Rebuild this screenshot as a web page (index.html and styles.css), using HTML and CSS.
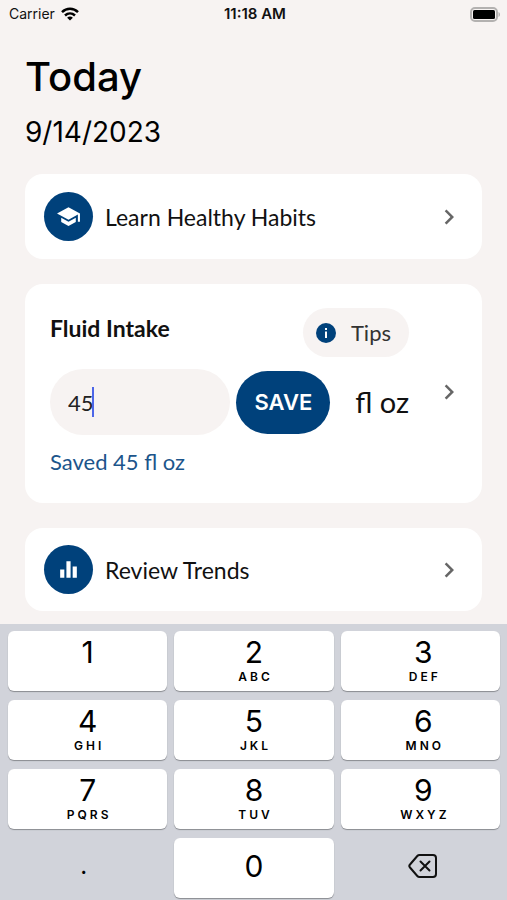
FILE: index.html
```html
<!DOCTYPE html>
<html lang="en">
<head>
<meta charset="utf-8">
<meta name="viewport" content="width=device-width, initial-scale=1">
<title>Today</title>
<link rel="stylesheet" href="styles.css">
</head>
<body>
<div class="app">
  <header class="status">
    <div class="carrier">
      <span>Carrier</span>
      <svg width="18" height="14" viewBox="0 0 18 14" fill="none" stroke="#000" stroke-width="2.5" aria-hidden="true">
        <path d="M1 5.2C5.6.7 12.4.7 17 5.2"/>
        <path d="M4 8.5c3-2.8 7-2.8 10 0"/>
        <path d="M9 13.6 6.1 10.700c1.700-1.500 4.100-1.500 5.800 0z" fill="#000" stroke="none"/>
      </svg>
    </div>
    <time class="clock">11:18 AM</time>
    <svg class="battery" width="31" height="15" viewBox="0 0 31 15" aria-hidden="true">
      <rect x="1" y="1" width="26" height="13" rx="4" fill="none" stroke="#b3b1b0" stroke-width="2"/>
      <rect x="3" y="3" width="22" height="9" rx="1.500" fill="#000"/>
      <path d="M28.500 5v5c2-.8 2-4.200 0-5z" fill="#b3b1b0"/>
    </svg>
  </header>

  <main class="content">
    <h1 class="title">Today</h1>
    <p class="date">9/14/2023</p>

    <a class="card link-card" href="#learn">
      <span class="badge">
        <svg width="25" height="25" viewBox="0 0 24 24" fill="#fff" aria-hidden="true"><path d="M5 13.180v4L12 21l7-3.820v-4L12 17l-7-3.820zM12 3 1 9l11 6 9-4.910V17h2V9L12 3z"/></svg>
      </span>
      <span class="card-label">Learn Healthy Habits</span>
      <svg class="chevron" width="30" height="30" viewBox="0 0 24 24" aria-hidden="true"><path d="M10 6 8.590 7.410 13.170 12l-4.580 4.590L10 18l6-6z"/></svg>
    </a>

    <section class="card intake">
      <div class="intake-main">
        <div class="intake-head">
          <h2><label for="fluid">Fluid Intake</label></h2>
          <button class="tips" type="button">
            <svg width="20" height="20" viewBox="0 0 20 20" aria-hidden="true"><circle cx="10" cy="10" r="10" fill="#00417b"/><path d="M9 5h2v2H9zM9 8.500h2V15H9z" fill="#fff"/></svg>
            Tips
          </button>
        </div>
        <div class="entry">
          <div class="field">
            <input id="fluid" type="text" inputmode="decimal" value="45">
            <span class="caret"></span>
          </div>
          <button class="save" type="button">SAVE</button>
          <span class="unit">fl oz</span>
        </div>
        <p class="saved">Saved 45 fl oz</p>
      </div>
      <a href="#fluid-intake" class="more" aria-label="Fluid Intake">
        <svg class="chevron" width="30" height="30" viewBox="0 0 24 24" aria-hidden="true"><path d="M10 6 8.590 7.410 13.170 12l-4.580 4.590L10 18l6-6z"/></svg>
      </a>
    </section>

    <a class="card link-card" href="#trends">
      <span class="badge">
        <svg width="25" height="25" viewBox="0 0 24 24" fill="#fff" aria-hidden="true"><path d="M10 20h4V4h-4v16zm-6 0h4v-8H4v8zM16 9v11h4V9h-4z"/></svg>
      </span>
      <span class="card-label">Review Trends</span>
      <svg class="chevron" width="30" height="30" viewBox="0 0 24 24" aria-hidden="true"><path d="M10 6 8.590 7.410 13.170 12l-4.580 4.590L10 18l6-6z"/></svg>
    </a>
  </main>

  <div class="keypad">
    <button type="button" class="key"><span class="digit">1</span><span class="letters"></span></button>
    <button type="button" class="key"><span class="digit">2</span><span class="letters">ABC</span></button>
    <button type="button" class="key"><span class="digit">3</span><span class="letters">DEF</span></button>
    <button type="button" class="key"><span class="digit">4</span><span class="letters">GHI</span></button>
    <button type="button" class="key"><span class="digit">5</span><span class="letters">JKL</span></button>
    <button type="button" class="key"><span class="digit">6</span><span class="letters">MNO</span></button>
    <button type="button" class="key"><span class="digit">7</span><span class="letters">PQRS</span></button>
    <button type="button" class="key"><span class="digit">8</span><span class="letters">TUV</span></button>
    <button type="button" class="key"><span class="digit">9</span><span class="letters">WXYZ</span></button>
    <button type="button" class="key plain point"><span class="digit">.</span></button>
    <button type="button" class="key"><span class="digit">0</span></button>
    <button type="button" class="key plain" aria-label="Delete">
      <svg width="30" height="26" viewBox="0 0 30 26" fill="none" stroke="#111" stroke-width="2" stroke-linecap="round" stroke-linejoin="round" aria-hidden="true">
        <path d="M11.500 2H25a3 3 0 0 1 3 3v16a3 3 0 0 1-3 3H11.500a3 3 0 0 1-2.200-1L2 14.500a2.200 2.200 0 0 1 0-3L9.300 3a3 3 0 0 1 2.200-1z"/>
        <path d="m12.500 8.500 9 9m0-9-9 9"/>
      </svg>
    </button>
  </div>
</div>
</body>
</html>
```
FILE: styles.css
```css
:root {
  --bg: #f7f3f2;
  --blue: #00417b;
  --system: Inter, "Liberation Sans", sans-serif;
  --text: Lato, "Open Sans", sans-serif;
}

* { box-sizing: border-box; }

body {
  margin: 0;
  background: var(--bg);
  color: #111;
  font-family: var(--text);
}

h1, h2, p { margin: 0; }

button {
  border: 0;
  padding: 0;
  color: inherit;
  font-family: inherit;
}

a { color: inherit; text-decoration: none; }
svg { display: block; flex: none; }

.app {
  display: flex;
  flex-direction: column;
  min-height: 100vh;
}

.status {
  display: grid;
  grid-template-columns: 1fr auto 1fr;
  align-items: center;
  height: 28px;
  padding: 0 6px 0 9px;
  font: 14px/20px var(--system);
}

.carrier { display: flex; align-items: center; gap: 6px; }
.clock { font-size: 15px; font-weight: 600; }
.battery { justify-self: end; }

.content {
  display: flex;
  flex: 1;
  flex-direction: column;
  padding: 24px 25px 12px;
}

.title {
  color: #000;
  font: 500 40px/50px var(--system);
}

.date {
  margin: 12px 0 24px;
  color: #000;
  font: 28px/36px var(--system);
}

.card {
  display: flex;
  align-items: center;
  margin-bottom: 25px;
  border-radius: 18px;
  background: #fff;
}

.card:last-child { margin-bottom: 0; }

.link-card {
  gap: 12px;
  padding: 18px 18px 18px 19px;
}

.link-card:last-child { padding-block: 17px; }

.badge {
  display: grid;
  flex: none;
  place-items: center;
  width: 49px;
  height: 49px;
  border-radius: 50%;
  background: var(--blue);
}

.card-label { flex: 1; font-size: 23px; line-height: 28px; }
.chevron { fill: #666; }

.intake { padding: 24px 18px 27px 25px; }
.intake-main { flex: 1; min-width: 0; }
.more { margin-left: 25px; }

.intake-head {
  display: flex;
  align-items: flex-start;
  justify-content: space-between;
}

.intake-head h2 { font-size: 23px; font-weight: 700; line-height: 40px; }

.tips {
  display: flex;
  align-items: center;
  gap: 15px;
  height: 49px;
  padding: 0 18px 0 13px;
  border-radius: 25px;
  background: var(--bg);
  color: #333;
  font-size: 22px;
}

.entry { display: flex; align-items: center; margin-top: 12px; }
.field { position: relative; flex: 1; min-width: 0; }

.field input {
  display: block;
  width: 100%;
  height: 66px;
  padding: 0 18px;
  border: 0;
  border-radius: 33px;
  outline: 0;
  background: var(--bg);
  color: #222;
  font: 22px var(--text);
}

.caret {
  position: absolute;
  top: 18px;
  left: 42px;
  width: 2px;
  height: 30px;
  background: #4d66e8;
}

.save {
  height: 63px;
  margin-left: 6px;
  padding: 0 18px;
  border-radius: 32px;
  background: var(--blue);
  color: #fff;
  font: 600 22px var(--system);
}

.unit { margin-left: 25px; font-size: 29px; line-height: 36px; }

.saved {
  margin-top: 13px;
  color: #1c558b;
  font-size: 22px;
  line-height: 28px;
}

.keypad {
  display: grid;
  grid-template-columns: repeat(3, 1fr);
  grid-auto-rows: 60px;
  gap: 9px 7px;
  padding: 7px 7px 2px 8px;
  background: #d1d3da;
  font-family: var(--system);
}

.key {
  display: flex;
  flex-direction: column;
  align-items: center;
  justify-content: center;
  padding-bottom: 4px;
  border-radius: 6px;
  background: #fff;
  box-shadow: 0 1px 1px #898b90;
  color: #000;
}

.key:nth-child(3n) { padding-left: 6px; }

.digit { font-size: 30px; line-height: 36px; }

.letters {
  height: 14px;
  padding-left: 3px;
  font-size: 12px;
  font-weight: 600;
  letter-spacing: 3px;
  line-height: 14px;
}

.plain { background: none; box-shadow: none; }
.point { padding-right: 8px; }
.point .digit { font-size: 24px; }
```
